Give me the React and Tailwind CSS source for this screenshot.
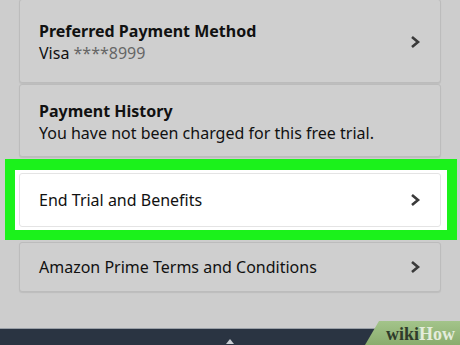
import React from 'react';

function Chevron() {
  return (
    <svg width="12" height="14" viewBox="0 0 12 14" className="shrink-0">
      <path d="M3 2 L9 7 L3 12" fill="none" stroke="#3a3a3a" strokeWidth="2.6" />
    </svg>
  );
}

function Row({ title, sub, bold, arrow = true, className = '' }) {
  return (
    <div
      className={`flex items-center justify-between border border-[#bcbcbc] rounded-[3px] pl-[19px] pr-[19px] shadow-[0_1px_1px_rgba(0,0,0,0.08)] ${className}`}
    >
      <div className="flex flex-col">
        {bold && (
          <span className="font-bold text-[16px] leading-[22px] text-[#111]">{bold}</span>
        )}
        {title && <span className="text-[16px] leading-[22px] text-[#111]">{title}</span>}
        {sub}
      </div>
      {arrow && <Chevron />}
    </div>
  );
}

export default function App() {
  return (
    <div
      className="relative w-[460px] h-[345px] overflow-hidden bg-[#cdcdcd]"
      style={{ fontFamily: '"Noto Sans", "Open Sans", sans-serif' }}
    >
      <div className="flex flex-col pt-0 px-[19px]">
        <Row
          className="h-[84px] mt-[-1px] pt-[2px] bg-[#cfcfcf]"
          bold="Preferred Payment Method"
          sub={
            <span className="text-[16px] leading-[22px] text-[#111]">
              Visa <span className="text-[#666]">****8999</span>
            </span>
          }
        />
        <Row
          className="h-[73px] mt-[1px] pt-[2px] bg-[#cfcfcf]"
          bold="Payment History"
          arrow={false}
          sub={
            <span className="text-[16px] leading-[22px] text-[#111]">
              You have not been charged for this free trial.
            </span>
          }
        />
        <div className="mt-[2px] ml-[-14px] mr-[-16px] border-[10px] border-t-[11px] border-[#1bf21b] bg-white pl-[4px] pr-[6px] py-[3px] h-[81px]">
          <Row className="h-full bg-white border-[#e4e4e4] shadow-none" title="End Trial and Benefits" />
        </div>
        <Row
          className="h-[50px] mt-[2px] bg-[#cfcfcf]"
          title="Amazon Prime Terms and Conditions"
        />
      </div>

      <div className="absolute left-0 right-0 bottom-0 h-[17px] bg-[#2a3442] border-t border-[#9aa0a8]">
        <div className="absolute left-[226px] top-[10px] w-0 h-0 border-l-[4px] border-r-[4px] border-b-[5px] border-l-transparent border-r-transparent border-b-[#c8cdd3]" />
      </div>

      <div className="absolute right-0 bottom-0 w-[95px] h-[24px] bg-[linear-gradient(180deg,#a3c48a,#8aac6e)] [clip-path:polygon(14px_0,100%_0,100%_100%,0_100%)] flex items-center justify-end pr-[5px] pt-[1px]">
        <span
          className="text-[18px] font-bold leading-none"
          style={{ fontFamily: '"Liberation Serif", "DejaVu Serif", serif' }}
        >
          <span className="text-[#2e3b2a]">wiki</span>
          <span className="text-[#e4ecdc]">How</span>
        </span>
      </div>
    </div>
  );
}
